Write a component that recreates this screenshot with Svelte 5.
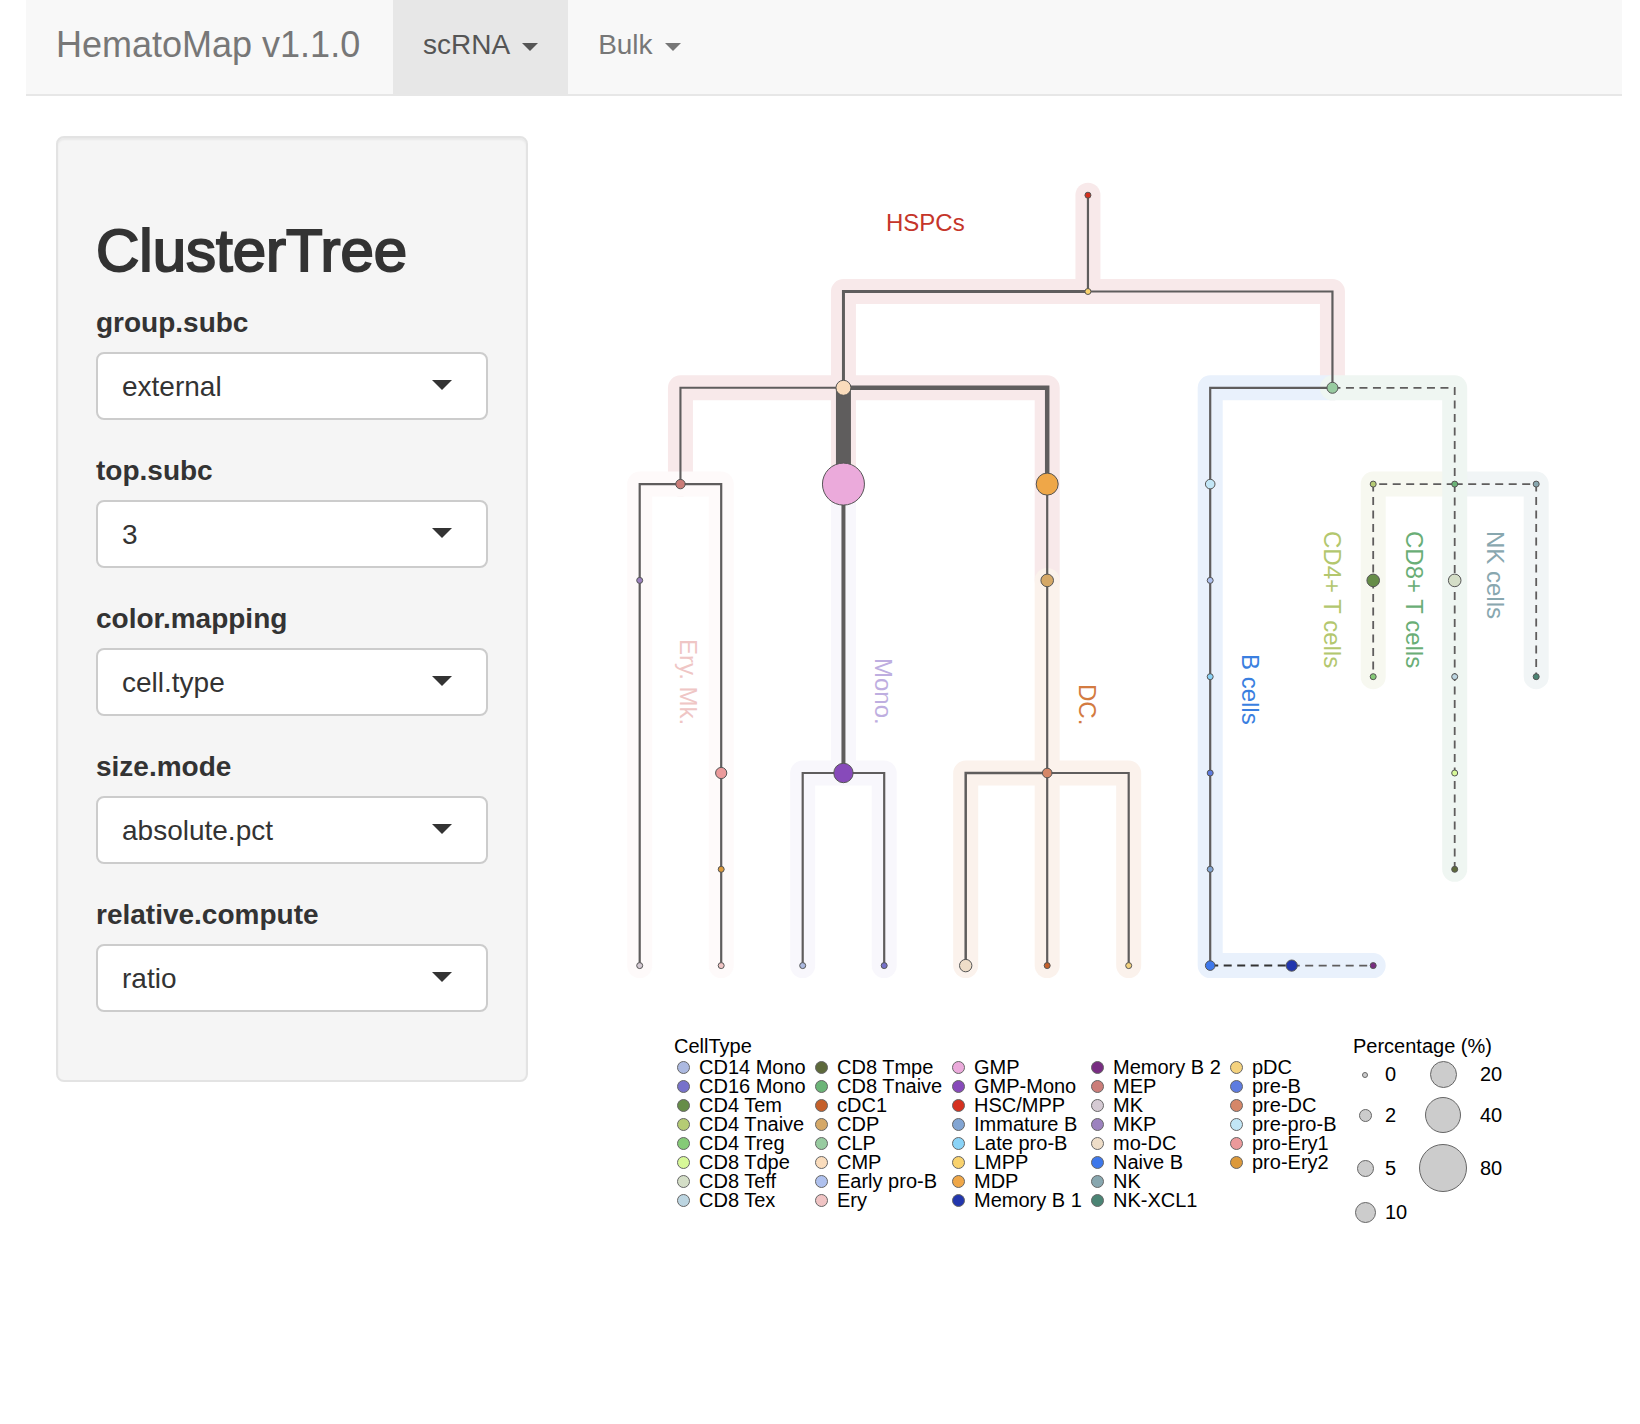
<script>
  const menus = [
    { label: 'scRNA', active: true },
    { label: 'Bulk', active: false }
  ];

  const fields = [
    { id: 'group-subc', label: 'group.subc', value: 'external' },
    { id: 'top-subc', label: 'top.subc', value: '3' },
    { id: 'color-mapping', label: 'color.mapping', value: 'cell.type' },
    { id: 'size-mode', label: 'size.mode', value: 'absolute.pct' },
    { id: 'relative-compute', label: 'relative.compute', value: 'ratio' }
  ];

  // Tree grid: column and row numbers to drawing units.
  const X = (c) => 51.7 + c * 40.75;
  const Y = (r) => 45.2 + r * 96.3;
  const path = (pts) => pts.map(([c, r], i) => `${i ? 'L' : 'M'}${X(c)} ${Y(r)}`).join(' ');

  const bands = [
    { color: '#f8e9ea', lines: [[[11, 0], [11, 1]], [[1, 3], [1, 2], [5, 2], [5, 1], [17, 1], [17, 2]], [[5, 3], [5, 2], [10, 2], [10, 4]]] },
    { color: '#fefafa', lines: [[[0, 8], [0, 3], [2, 3], [2, 8]]] },
    { color: '#f8f7fc', lines: [[[5, 3], [5, 6]], [[4, 8], [4, 6], [6, 6], [6, 8]]] },
    { color: '#fbf2ec', lines: [[[10, 4], [10, 8]], [[8, 8], [8, 6], [12, 6], [12, 8]]] },
    { color: '#e9f1fc', lines: [[[17, 2], [14, 2], [14, 8], [18, 8]]] },
    { color: '#f7f8f0', lines: [[[20, 3], [18, 3], [18, 5]]] },
    { color: '#f1f5f6', lines: [[[20, 3], [22, 3], [22, 5]]] },
    { color: '#eff6f2', lines: [[[17, 2], [20, 2], [20, 7]]] }
  ];

  const edges = [
    { pts: [[11, 0], [11, 1]], w: 2.2 },
    { pts: [[11, 1], [5, 1], [5, 2]], w: 3 },
    { pts: [[11, 1], [17, 1], [17, 2]], w: 2.2 },
    { pts: [[5, 2], [1, 2], [1, 3]], w: 2.1 },
    { pts: [[5, 2], [5, 3]], w: 15 },
    { pts: [[5, 2], [10, 2], [10, 3]], w: 4.5 },
    { pts: [[1, 3], [0, 3], [0, 8]], w: 2.2 },
    { pts: [[1, 3], [2, 3], [2, 8]], w: 2.2 },
    { pts: [[5, 3], [5, 6]], w: 4 },
    { pts: [[5, 6], [4, 6], [4, 8]], w: 2.2 },
    { pts: [[5, 6], [6, 6], [6, 8]], w: 2.2 },
    { pts: [[10, 3], [10, 8]], w: 2.2 },
    { pts: [[10, 6], [8, 6], [8, 8]], w: 2.5 },
    { pts: [[10, 6], [12, 6], [12, 8]], w: 2.2 },
    { pts: [[17, 2], [14, 2], [14, 8]], w: 2.2 },
    { pts: [[17, 2], [20, 2], [20, 3]], w: 1.8, dash: true },
    { pts: [[20, 3], [18, 3], [18, 4]], w: 1.8, dash: true },
    { pts: [[18, 4], [18, 5]], w: 1.8, dash: true },
    { pts: [[20, 3], [22, 3], [22, 5]], w: 1.8, dash: true },
    { pts: [[20, 3], [20, 7]], w: 1.8, dash: true },
    { pts: [[14, 8], [16, 8]], w: 2, dash: true, dark: true },
    { pts: [[16, 8], [18, 8]], w: 1.6, dash: true }
  ];

  const nodes = [
    [11, 0, 3, '#d5311f'], [11, 1, 3, '#f9d26d'], [5, 2, 7.5, '#fadcbc'], [17, 2, 5.5, '#98cba0'],
    [1, 3, 4.7, '#cb7d79'], [5, 3, 21, '#ebaadb'], [10, 3, 11, '#efa748'], [14, 3, 4.8, '#c2e6f6'],
    [18, 3, 3, '#b5cb74'], [20, 3, 3, '#6bb477'], [22, 3, 3, '#88a7af'],
    [0, 4, 3, '#9c82be'], [10, 4, 6.3, '#d5a867'], [14, 4, 3, '#afc1ee'], [18, 4, 6.3, '#668d48'], [20, 4, 6.3, '#d4dec7'],
    [14, 5, 3, '#8ad3f7'], [18, 5, 3, '#85ca77'], [20, 5, 3, '#bcd5e1'], [22, 5, 3, '#4b8474'],
    [2, 6, 5.6, '#eb9a9b'], [5, 6, 9.7, '#874aba'], [10, 6, 4.8, '#d58768'], [14, 6, 3, '#5e7ce0'], [20, 6, 3, '#d7f898'],
    [2, 7, 3, '#dc993b'], [14, 7, 3, '#82a5d3'], [20, 7, 3, '#5d693b'],
    [0, 8, 3, '#d5cad3'], [2, 8, 3, '#f0c4c4'], [4, 8, 3, '#acb9e0'], [6, 8, 3, '#7772ca'],
    [8, 8, 6.2, '#eeddc8'], [10, 8, 3, '#c5602a'], [12, 8, 3, '#f4d27e'],
    [14, 8, 4.8, '#3e78eb'], [16, 8, 5.6, '#2236ad'], [18, 8, 3, '#782d82']
  ];

  // Branch names; those marked down read from top to bottom.
  const names = [
    { text: 'HSPCs', x: 298, y: 81, color: '#c5352a' },
    { text: 'Ery. Mk.', x: 92, y: 489, color: '#efc6c5', down: true },
    { text: 'Mono.', x: 287, y: 508, color: '#beaee0', down: true },
    { text: 'DC.', x: 491, y: 534, color: '#d37b41', down: true },
    { text: 'B cells', x: 654, y: 504, color: '#3a7fe0', down: true },
    { text: 'CD4+ T cells', x: 736, y: 381, color: '#b3c76e', down: true },
    { text: 'CD8+ T cells', x: 818, y: 381, color: '#6aae76', down: true },
    { text: 'NK cells', x: 899, y: 381, color: '#88a7af', down: true }
  ];

  const cellTypes = [
    ['CD14 Mono', '#acb9e0'], ['CD16 Mono', '#7772ca'], ['CD4 Tem', '#668d48'], ['CD4 Tnaive', '#b5cb74'],
    ['CD4 Treg', '#85ca77'], ['CD8 Tdpe', '#d7f898'], ['CD8 Teff', '#d4dec7'], ['CD8 Tex', '#bcd5e1'],
    ['CD8 Tmpe', '#5d693b'], ['CD8 Tnaive', '#6bb477'], ['cDC1', '#c5602a'], ['CDP', '#d5a867'],
    ['CLP', '#98cba0'], ['CMP', '#fadcbc'], ['Early pro-B', '#afc1ee'], ['Ery', '#f0c4c4'],
    ['GMP', '#ebaadb'], ['GMP-Mono', '#874aba'], ['HSC/MPP', '#d5311f'], ['Immature B', '#82a5d3'],
    ['Late pro-B', '#8ad3f7'], ['LMPP', '#f9d26d'], ['MDP', '#efa748'], ['Memory B 1', '#2236ad'],
    ['Memory B 2', '#782d82'], ['MEP', '#cb7d79'], ['MK', '#d5cad3'], ['MKP', '#9c82be'],
    ['mo-DC', '#eeddc8'], ['Naive B', '#3e78eb'], ['NK', '#88a7af'], ['NK-XCL1', '#4b8474'],
    ['pDC', '#f4d27e'], ['pre-B', '#5e7ce0'], ['pre-DC', '#d58768'], ['pre-pro-B', '#c2e6f6'],
    ['pro-Ery1', '#eb9a9b'], ['pro-Ery2', '#dc993b']
  ];

  const sizes = [
    [0, 6], [2, 13], [5, 17], [10, 21], [20, 27], [40, 36], [80, 48]
  ];
</script>

<nav class="navbar">
  <a class="brand" href="#home">HematoMap v1.1.0</a>
  {#each menus as menu}
    <a class="menu" class:active={menu.active} href="#{menu.label}">
      {menu.label}<span class="caret"></span>
    </a>
  {/each}
</nav>

<main class="layout">
  <form class="panel">
    <h2>ClusterTree</h2>
    {#each fields as field}
      <div class="field">
        <label for={field.id}>{field.label}</label>
        <div class="control">
          <select id={field.id}>
            <option>{field.value}</option>
          </select>
          <span class="caret"></span>
        </div>
      </div>
    {/each}
  </form>

  <section class="plot">
    <svg class="tree" viewBox="0 0 1004 850" role="img" aria-label="Cluster tree">
      {#each bands as band}
        {#each band.lines as line}
          <path class="band" d={path(line)} stroke={band.color} />
        {/each}
      {/each}
      {#each edges as edge}
        <path class="edge" class:dash={edge.dash} class:dark={edge.dark} d={path(edge.pts)} stroke-width={edge.w} />
      {/each}
      {#each nodes as [c, r, radius, color]}
        <circle class="node" cx={X(c)} cy={Y(r)} r={radius} fill={color} />
      {/each}
      {#each names as name}
        <text class="name" fill={name.color} transform="translate({name.x} {name.y}) rotate({name.down ? 90 : 0})">{name.text}</text>
      {/each}
    </svg>

    <div class="legends">
      <section>
        <h3>CellType</h3>
        <ul class="types">
          {#each cellTypes as [label, color]}
            <li><span class="dot" style:background={color}></span>{label}</li>
          {/each}
        </ul>
      </section>
      <section>
        <h3>Percentage (%)</h3>
        <ul class="sizes">
          {#each sizes as [label, diameter]}
            <li>
              <span class="bubble"><span class="disc" style:width="{diameter}px" style:height="{diameter}px"></span></span>{label}
            </li>
          {/each}
        </ul>
      </section>
    </div>
  </section>
</main>

<style>
  :global(body) {
    margin: 0;
    background: #fff;
    color: #333;
    font-family: "Liberation Sans", Arial, sans-serif;
    font-size: 28px;
  }
  .navbar {
    display: flex;
    margin: 0 18px 0 26px;
    background: #f8f8f8;
    border-bottom: 2px solid #e7e7e7;
  }
  .navbar a {
    color: #777;
    text-decoration: none;
    line-height: 40px;
    padding: 25px 30px 29px;
  }
  .navbar .brand {
    min-width: 307px;
    font-size: 36px;
  }
  .navbar .menu {
    display: flex;
    align-items: center;
    gap: 12px;
  }
  .navbar .active {
    background: #e7e7e7;
    color: #555;
  }
  .caret {
    border: 8px solid transparent;
    border-top-color: currentColor;
    border-bottom: 0;
  }
  .menu .caret {
    margin-top: 4px;
  }
  .layout {
    display: flex;
    align-items: flex-start;
    gap: 60px;
    padding: 40px 48px 40px 56px;
  }
  .panel {
    flex: 0 0 472px;
    box-sizing: border-box;
    padding: 80px 38px 38px;
    background: #f5f5f5;
    border: 2px solid #e3e3e3;
    border-radius: 8px;
    box-shadow: inset 0 2px 2px rgba(0, 0, 0, 0.05);
  }
  h2 {
    margin: 0 0 19px;
    font-size: 60px;
    line-height: 66px;
    font-weight: 500;
    -webkit-text-stroke: 2px currentColor;
  }
  .field {
    margin-bottom: 30px;
  }
  label {
    display: block;
    margin-bottom: 9px;
    line-height: 40px;
    font-weight: 700;
  }
  .field + .field label {
    padding-top: 1px;
  }
  .control {
    position: relative;
  }
  select {
    display: block;
    width: 100%;
    height: 68px;
    padding: 0 24px;
    appearance: none;
    background: #fff;
    border: 2px solid #ccc;
    border-radius: 8px;
    color: #333;
    font: inherit;
  }
  .control .caret {
    position: absolute;
    right: 36px;
    top: 28px;
    border-width: 10px 10px 0;
    pointer-events: none;
  }
  .plot {
    flex: 1;
    min-width: 0;
    padding-top: 14px;
  }
  .tree {
    display: block;
    width: 100%;
  }
  .band {
    fill: none;
    stroke-width: 25;
    stroke-linecap: round;
    stroke-linejoin: round;
  }
  .edge {
    fill: none;
    stroke: #5f5d5d;
  }
  .dash {
    stroke-dasharray: 8 5.5;
  }
  .dark {
    stroke: #333;
  }
  .node {
    stroke: #555;
    stroke-width: 1;
  }
  .name {
    font-size: 24px;
  }
  .legends {
    display: flex;
    margin: 35px 0 0 86px;
    color: #000;
    font-size: 20px;
  }
  h3 {
    margin: 0;
    font-size: 20px;
    line-height: 23px;
    font-weight: 400;
  }
  ul {
    margin: 0;
    padding: 0;
    list-style: none;
  }
  .types {
    display: grid;
    grid-auto-flow: column;
    grid-template-rows: repeat(8, 19px);
    grid-template-columns: 138px 137px 139px 139px 123px;
    padding-left: 3px;
  }
  li {
    display: flex;
    align-items: center;
    white-space: nowrap;
  }
  .dot,
  .disc {
    box-sizing: border-box;
    border: 1px solid #666;
    border-radius: 50%;
  }
  .dot {
    width: 13px;
    height: 13px;
    margin-right: 9px;
  }
  .sizes {
    display: grid;
    grid-auto-flow: column;
    grid-template-rows: 33px 48px 58px 30px;
    grid-template-columns: 66px 94px;
  }
  .bubble {
    display: flex;
    justify-content: center;
    width: 24px;
    margin-right: 8px;
  }
  .disc {
    flex: none;
    background: #ccc;
  }
  .sizes li:nth-child(n + 5) .bubble {
    width: 48px;
    margin-right: 13px;
  }
</style>
